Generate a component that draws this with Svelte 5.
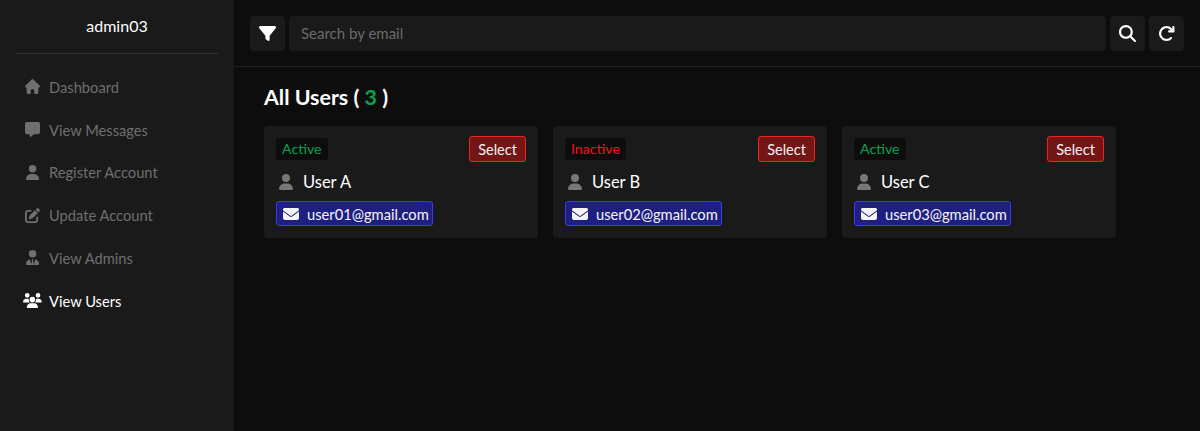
<script>
  const icons = {
    house: { box: '0 0 576 512', fit: 'none', d: 'M575.8 255.5c0 18-15 32.1-32 32.1h-32l.7 160.2c0 2.7-.2 5.4-.5 8.1V472c0 22.1-17.9 40-40 40H456c-1.1 0-2.2 0-3.3-.1c-1.4 .1-2.8 .1-4.2 .1H416 392c-22.1 0-40-17.9-40-40V448 384c0-17.7-14.3-32-32-32H256c-17.7 0-32 14.3-32 32v64 24c0 22.1-17.9 40-40 40H160 128.1c-1.5 0-3-.1-4.5-.2c-1.2 .1-2.4 .2-3.6 .2H104c-22.1 0-40-17.9-40-40V360c0-.9 0-1.9 .1-2.8V287.6H32c-18 0-32-14-32-32.1c0-9 3-17 10-24L266.4 8c7-7 15-8 22-8s15 2 21 7L564.8 231.5c8 7 12 15 11 24z' },
    message: { box: '0 0 512 512', d: 'M64 0C28.7 0 0 28.7 0 64V352c0 35.3 28.7 64 64 64h96v80c0 6.1 3.4 11.6 8.8 14.3s11.9 2.1 16.8-1.5L309.3 416H448c35.3 0 64-28.7 64-64V64c0-35.3-28.7-64-64-64H64z' },
    user: { box: '0 0 448 512', d: 'M224 256A128 128 0 1 0 224 0a128 128 0 1 0 0 256zm-45.7 48C79.8 304 0 383.8 0 482.3C0 498.7 13.3 512 29.7 512H418.3c16.4 0 29.7-13.3 29.7-29.7C448 383.8 368.2 304 269.7 304H178.3z' },
    edit: { box: '0 0 512 512', d: 'M471.6 21.7c-21.9-21.9-57.3-21.9-79.2 0L362.3 51.7l97.9 97.9 30.1-30.1c21.9-21.9 21.9-57.3 0-79.2L471.6 21.7zm-299.2 220c-6.1 6.1-10.8 13.6-13.5 21.9l-29.6 88.8c-2.9 8.6-.6 18.1 5.8 24.6s15.9 8.7 24.6 5.8l88.8-29.6c8.2-2.7 15.7-7.4 21.9-13.5L437.7 172.3 339.7 74.3 172.4 241.7zM96 64C43 64 0 107 0 160V416c0 53 43 96 96 96H352c53 0 96-43 96-96V320c0-17.7-14.3-32-32-32s-32 14.3-32 32v96c0 17.7-14.3 32-32 32H96c-17.7 0-32-14.3-32-32V160c0-17.7 14.3-32 32-32h96c17.7 0 32-14.3 32-32s-14.3-32-32-32H96z' },
    tie: { box: '0 0 448 512', d: 'M96 128a128 128 0 1 0 256 0A128 128 0 1 0 96 128zm94.5 200.2l18.6 31L175.8 483.1l-36-146.9c-2-8.1-9.8-13.4-17.9-11.3C51.9 342.4 0 405.8 0 481.3c0 17 13.8 30.7 30.7 30.7H162.5c0 0 0 0 .1 0H168 280h5.5c0 0 0 0 .1 0H417.3c17 0 30.7-13.8 30.7-30.7c0-75.5-51.9-138.9-121.9-156.4c-8.1-2-15.9 3.3-17.9 11.3l-36 146.9L238.9 359.2l18.6-31c6.4-10.7-1.3-24.2-13.7-24.2H224 204.3c-12.4 0-20.1 13.6-13.7 24.2z' },
    users: { box: '0 0 640 512', d: 'M144 0a80 80 0 1 1 0 160A80 80 0 1 1 144 0zM512 0a80 80 0 1 1 0 160A80 80 0 1 1 512 0zM0 298.7C0 239.8 47.8 192 106.7 192h42.7c15.9 0 31 3.5 44.6 9.7c-1.3 7.2-1.9 14.7-1.9 22.3c0 38.2 16.8 72.5 43.3 96c-.2 0-.4 0-.7 0H21.3C9.6 320 0 310.4 0 298.7zM405.3 320c-.2 0-.4 0-.7 0c26.6-23.5 43.3-57.8 43.3-96c0-7.6-.7-15-1.9-22.3c13.6-6.3 28.7-9.7 44.6-9.7h42.7C592.2 192 640 239.8 640 298.7c0 11.8-9.6 21.3-21.3 21.3H405.3zM224 224a96 96 0 1 1 192 0 96 96 0 1 1 -192 0zM128 485.3C128 411.7 187.7 352 261.3 352H378.7C452.3 352 512 411.7 512 485.3c0 14.7-11.9 26.7-26.7 26.7H154.7c-14.7 0-26.7-11.9-26.7-26.7z' },
    envelope: { box: '0 0 512 512', d: 'M48 64C21.5 64 0 85.5 0 112c0 15.1 7.1 29.3 19.2 38.4L236.8 313.6c11.4 8.5 27 8.5 38.4 0L492.8 150.4c12.1-9.1 19.2-23.3 19.2-38.4c0-26.5-21.5-48-48-48H48zM0 176V384c0 35.3 28.7 64 64 64H448c35.3 0 64-28.7 64-64V176L294.4 339.2c-22.8 17.1-54 17.1-76.8 0L0 176z' },
    filter: { box: '0 0 512 512', d: 'M3.9 54.9C10.5 40.9 24.5 32 40 32H472c15.5 0 29.5 8.9 36.1 22.9s4.6 30.5-5.2 42.5L320 320.9V448c0 12.1-6.8 23.2-17.7 28.6s-23.8 4.3-33.5-3l-64-48c-8.1-6-12.8-15.5-12.8-25.6V320.9L9 97.3C-.7 85.4-2.8 68.8 3.9 54.9z' },
    search: { box: '0 0 512 512', d: 'M416 208c0 45.9-14.9 88.3-40 122.7L502.6 457.4c12.5 12.5 12.5 32.8 0 45.3s-32.8 12.5-45.3 0L330.7 376c-34.4 25.2-76.8 40-122.7 40C93.1 416 0 322.9 0 208S93.1 0 208 0S416 93.1 416 208zM208 352a144 144 0 1 0 0-288 144 144 0 1 0 0 288z' },
    refresh: { box: '0 0 512 512', d: 'M386.3 160H336c-17.7 0-32 14.3-32 32s14.3 32 32 32H464c17.7 0 32-14.3 32-32V64c0-17.7-14.3-32-32-32s-32 14.3-32 32v51.2L414.4 97.6c-87.5-87.5-229.3-87.5-316.8 0s-87.5 229.3 0 316.8s229.3 87.5 316.8 0c12.5-12.5 12.5-32.8 0-45.3s-32.8-12.5-45.3 0c-62.5 62.5-163.8 62.5-226.3 0s-62.5-163.8 0-226.3s163.8-62.5 226.3 0L386.3 160z' }
  };

  const nav = [
    { label: 'Dashboard', icon: 'house' },
    { label: 'View Messages', icon: 'message' },
    { label: 'Register Account', icon: 'user' },
    { label: 'Update Account', icon: 'edit' },
    { label: 'View Admins', icon: 'tie' },
    { label: 'View Users', icon: 'users', active: true }
  ];

  const users = [
    { name: 'User A', email: 'user01@gmail.com', active: true },
    { name: 'User B', email: 'user02@gmail.com', active: false },
    { name: 'User C', email: 'user03@gmail.com', active: true }
  ];
</script>

{#snippet icon(name, cls)}
  <svg class={cls} viewBox={icons[name].box} preserveAspectRatio={icons[name].fit} fill="currentColor" aria-hidden="true">
    <path d={icons[name].d} />
  </svg>
{/snippet}

<div class="layout">
  <aside class="sidebar">
    <div class="profile">admin03</div>
    <nav>
      {#each nav as item}
        <div class="nav-item" class:active={item.active}>
          <span class="nav-icon">{@render icon(item.icon, item.icon === 'house' ? 'ico-nav ico-house' : 'ico-nav')}</span>
          <span>{item.label}</span>
        </div>
      {/each}
    </nav>
  </aside>

  <main>
    <header class="topbar">
      <button class="tool">{@render icon('filter', 'ico-tool')}</button>
      <input type="text" placeholder="Search by email" />
      <button class="tool">{@render icon('search', 'ico-tool')}</button>
      <button class="tool">{@render icon('refresh', 'ico-tool')}</button>
    </header>

    <section class="content">
      <h1>All Users ( <span class="count">3</span> )</h1>
      <div class="cards">
        {#each users as user}
          <article class="card">
            <div class="card-top">
              <span class="status" class:inactive={!user.active}>{user.active ? 'Active' : 'Inactive'}</span>
              <button class="select">Select</button>
            </div>
            <div class="name">
              {@render icon('user', 'ico-user')}
              <span>{user.name}</span>
            </div>
            <div class="email">
              {@render icon('envelope', 'ico-mail')}
              <span>{user.email}</span>
            </div>
          </article>
        {/each}
      </div>
    </section>
  </main>
</div>

<style>
  :global(body) {
    margin: 0;
    background: #0d0d0d;
    font-family: Lato, "Noto Sans", sans-serif;
  }

  .layout {
    display: flex;
    height: 431px;
    overflow: hidden;
  }

  .sidebar {
    width: 234px;
    flex-shrink: 0;
    background: #1a1a1a;
    padding: 0 16px;
    box-sizing: border-box;
  }

  .profile {
    height: 54px;
    padding-top: 14px;
    box-sizing: border-box;
    border-bottom: 1px solid #333;
    text-align: center;
    color: #fff;
    font-size: 16px;
    line-height: 24px;
  }

  nav {
    padding-top: 11.4px;
  }

  .nav-item {
    display: flex;
    align-items: center;
    height: 42.8px;
    color: #6f6f6f;
    font-size: 14.7px;
  }

  .nav-item.active {
    color: #fff;
  }

  .nav-icon {
    width: 33px;
    display: flex;
    justify-content: center;
  }

  .ico-nav {
    height: 15px;
  }

  .ico-house {
    width: 15px;
  }

  main {
    flex: 1;
    min-width: 0;
  }

  .topbar {
    display: flex;
    gap: 4px;
    height: 67px;
    padding: 16px 16px 0;
    box-sizing: border-box;
    border-bottom: 1px solid #222;
  }

  .tool {
    width: 35px;
    height: 35px;
    border: none;
    border-radius: 4px;
    background: #1a1a1a;
    color: #fff;
    display: flex;
    align-items: center;
    justify-content: center;
    padding: 0;
  }

  .ico-tool {
    height: 17px;
  }

  input {
    flex: 1;
    min-width: 0;
    height: 35px;
    border: none;
    border-radius: 4px;
    background: #1a1a1a;
    padding: 0 12px 2px;
    box-sizing: border-box;
    font: inherit;
    font-size: 15px;
    color: #fff;
  }

  input::placeholder {
    color: #6b6b6b;
    opacity: 1;
  }

  .content {
    padding: 16px 30px;
  }

  h1 {
    margin: 0 0 15px;
    color: #fff;
    font-size: 21.4px;
    line-height: 28px;
    font-weight: 700;
  }

  .count {
    color: #0aa14e;
  }

  .cards {
    display: flex;
    gap: 15px;
  }

  .card {
    width: 274px;
    height: 112px;
    background: #1a1a1a;
    border-radius: 4px;
    padding: 10px 12px;
    box-sizing: border-box;
  }

  .card-top {
    display: flex;
    justify-content: space-between;
    align-items: center;
    height: 26px;
  }

  .status {
    background: #0d0d0d;
    color: #0aa14e;
    border-radius: 3px;
    padding: 0 6px;
    font-size: 14.2px;
    line-height: 22px;
  }

  .status.inactive {
    color: #f0141c;
  }

  .select {
    height: 26px;
    width: 57px;
    padding: 0;
    background: #741616;
    border: 1px solid #f02222;
    border-radius: 3px;
    color: #f2f2f2;
    font: inherit;
    font-size: 14.5px;
  }

  .name {
    display: flex;
    align-items: center;
    gap: 10px;
    height: 24px;
    margin-top: 8px;
    padding-left: 3px;
    color: #fff;
    font-size: 16.5px;
  }

  .ico-user {
    height: 16px;
    color: #777;
  }

  .email {
    display: inline-flex;
    align-items: center;
    gap: 8px;
    height: 25px;
    margin-top: 7px;
    padding: 0 3px 0 6px;
    background: #1f1f7f;
    border: 1px solid #3a3af0;
    border-radius: 3px;
    box-sizing: border-box;
    color: #f5f5f5;
    font-size: 14.7px;
  }

  .ico-mail {
    height: 16px;
  }
</style>
